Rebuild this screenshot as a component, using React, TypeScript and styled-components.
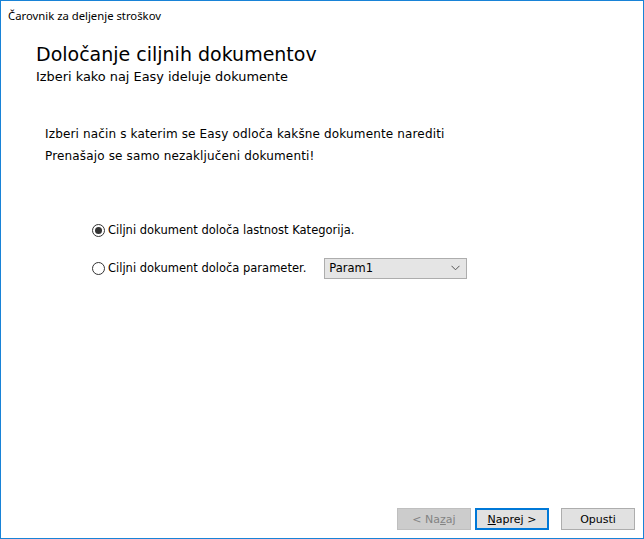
import React from "react";
import styled, { createGlobalStyle } from "styled-components";

const GlobalStyle = createGlobalStyle`
  html, body {
    margin: 0;
    padding: 0;
    background: #ffffff;
  }
  * {
    box-sizing: border-box;
  }
`;

const Window = styled.div`
  width: 644px;
  height: 539px;
  border: 1px solid #1883d7;
  background: #ffffff;
  display: flex;
  flex-direction: column;
  font-family: "DejaVu Sans", Verdana, sans-serif;
  color: #000000;
`;

const TitleBar = styled.div`
  height: 30px;
  padding: 7px 0 0 7px;
  font-family: "Noto Sans", "Open Sans", sans-serif;
  font-size: 11.3px;
  line-height: 16px;
  color: #000000;
`;

const Header = styled.div`
  padding: 11px 0 0 35px;
  display: flex;
  flex-direction: column;
  gap: 3px;
`;

const Heading = styled.h1`
  margin: 0;
  font-weight: normal;
  font-size: 19px;
  line-height: 24px;
  color: #000000;
`;

const SubHeading = styled.div`
  font-size: 12.9px;
  line-height: 16px;
`;

const Body = styled.div`
  padding: 38px 0 0 44px;
  font-size: 12px;
  letter-spacing: 0.15px;
  line-height: 22px;
  color: #000000;
`;

const Options = styled.div`
  margin-top: 52px;
  padding-left: 91px;
  display: flex;
  flex-direction: column;
  gap: 16px;
`;

const OptionRow = styled.label`
  height: 22px;
  display: flex;
  align-items: center;
  font-size: 11.5px;
  cursor: default;
`;

const RadioCircle = styled.span<{ $checked?: boolean }>`
  width: 13px;
  height: 13px;
  border-radius: 50%;
  border: 1px solid #333333;
  background: #ffffff;
  display: flex;
  align-items: center;
  justify-content: center;
  margin-right: 3px;
  flex: none;

  &::after {
    content: "";
    width: 7px;
    height: 7px;
    border-radius: 50%;
    background: #333333;
    display: ${(p) => (p.$checked ? "block" : "none")};
  }
`;

const Select = styled.div`
  margin-left: 18px;
  width: 143px;
  height: 21px;
  background: #e5e5e5;
  border: 1px solid #adadad;
  display: flex;
  align-items: center;
  justify-content: space-between;
  padding: 0 6px 0 4px;
  font-size: 11.5px;
`;

const Footer = styled.div`
  margin-top: auto;
  padding: 0 8px 8px 0;
  display: flex;
  justify-content: flex-end;
  gap: 4px;
`;

const Button = styled.button<{ $default?: boolean; $spaced?: boolean }>`
  width: 74px;
  height: 22px;
  margin-left: ${(p) => (p.$spaced ? "8px" : "0")};
  padding: 0;
  font-family: "DejaVu Sans", Verdana, sans-serif;
  font-size: 11px;
  color: #000000;
  background: #e1e1e1;
  border: ${(p) => (p.$default ? "2px solid #0078d7" : "1px solid #adadad")};

  &:disabled {
    background: #cccccc;
    border-color: #bfbfbf;
    color: #838383;
  }
`;

const Chevron = () => (
  <svg width="9" height="6" viewBox="0 0 9 6" fill="none">
    <path d="M0.5 0.8 L4.5 4.8 L8.5 0.8" stroke="#555" strokeWidth="1" />
  </svg>
);

export default function App() {
  return (
    <>
      <GlobalStyle />
      <Window>
        <TitleBar>Čarovnik za deljenje stroškov</TitleBar>
        <Header>
          <Heading>Določanje ciljnih dokumentov</Heading>
          <SubHeading>Izberi kako naj Easy ideluje dokumente</SubHeading>
        </Header>
        <Body>
          <div>Izberi način s katerim se Easy odloča kakšne dokumente narediti</div>
          <div>Prenašajo se samo nezaključeni dokumenti!</div>
        </Body>
        <Options>
          <OptionRow>
            <RadioCircle $checked />
            Ciljni dokument določa lastnost Kategorija.
          </OptionRow>
          <OptionRow>
            <RadioCircle />
            Ciljni dokument določa parameter.
            <Select>
              <span>Param1</span>
              <Chevron />
            </Select>
          </OptionRow>
        </Options>
        <Footer>
          <Button disabled>
            &lt; Na<u>z</u>aj
          </Button>
          <Button $default>
            <u>N</u>aprej &gt;
          </Button>
          <Button $spaced>Opusti</Button>
        </Footer>
      </Window>
    </>
  );
}
